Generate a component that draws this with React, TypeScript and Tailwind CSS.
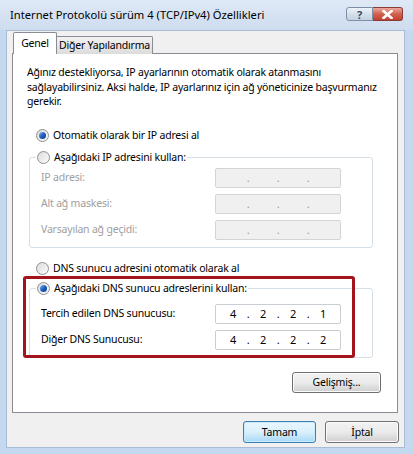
import React from 'react'

const font = { fontFamily: '"Noto Sans", "Liberation Sans", sans-serif' }

function Radio({ checked = false }: { checked?: boolean }) {
  return (
    <span className="relative inline-flex h-[13px] w-[13px] shrink-0 items-center justify-center rounded-full border border-[#8f8f8f] bg-gradient-to-br from-[#dcdcdc] to-[#fbfbfb]">
      {checked && (
        <span className="h-[7px] w-[7px] rounded-full bg-gradient-to-br from-[#8ab4f0] via-[#1f5fbf] to-[#0a3d8f]" />
      )}
    </span>
  )
}

function WinButton({ label, focused = false, className = '' }: { label: string; focused?: boolean; className?: string }) {
  return (
    <div
      className={
        'flex items-center justify-center rounded-[3px] border text-black ' +
        (focused
          ? 'border-[#3c7fb1] bg-gradient-to-b from-[#eaf6fd] via-[#d9f0fc] to-[#a7d9f5] shadow-[inset_0_0_0_1px_#c8ecfb] '
          : 'border-[#707070] bg-gradient-to-b from-[#f2f2f2] via-[#ebebeb] to-[#cfcfcf] shadow-[inset_0_0_0_1px_#fcfcfc] ') +
        className
      }
    >
      {label}
    </div>
  )
}

function IpBox({ values, disabled = false }: { values?: string[]; disabled?: boolean }) {
  const segs = values ?? ['', '', '', '']
  return (
    <div
      className={
        'flex h-[20px] w-[126px] items-center justify-center rounded-[2px] border text-[11px] ' +
        (disabled ? 'border-[#d4d4d4] bg-[#f0f0f0] text-[#9a9a9a]' : 'border-[#c9ced4] bg-white text-black')
      }
    >
      {segs.map((v, i) => (
        <React.Fragment key={i}>
          <span className="w-[22px] text-center">{v}</span>
          {i < 3 && <span className="w-[8px] text-center">.</span>}
        </React.Fragment>
      ))}
    </div>
  )
}

function FieldRow({ label, disabled = false, values }: { label: string; disabled?: boolean; values?: string[] }) {
  return (
    <div className="flex h-[26px] items-center">
      <span className={'w-[174px] ' + (disabled ? 'text-[#a0a0a0]' : 'text-black')}>{label}</span>
      <IpBox disabled={disabled} values={values} />
    </div>
  )
}

export default function App() {
  return (
    <div className="relative flex h-[454px] w-[413px] flex-col bg-[#c4d8ef] text-[10.5px] leading-[15px] tracking-[-0.2px]" style={font}>
      {/* Title bar */}
      <div className="flex h-[30px] items-start bg-gradient-to-b from-[#dfe9f6] to-[#cddcef] pl-[10px] pr-[10px]">
        <span className="mt-[7px] text-[11.2px] tracking-normal text-black">Internet Protokolü sürüm 4 (TCP/IPv4) Özellikleri</span>
        <div className="ml-auto mt-[7px] flex">
          <div className="flex h-[14px] w-[27px] items-center justify-center rounded-l-[3px] border border-[#7d8ea6] bg-gradient-to-b from-[#eef3f9] via-[#d6e0ec] to-[#c3d1e2] text-[11px] font-bold leading-none text-[#3c4a5e]">
            ?
          </div>
          <div className="flex h-[14px] w-[30px] items-center justify-center rounded-r-[3px] border border-l-0 border-[#8a3c34] bg-gradient-to-b from-[#eaa89b] via-[#d2604f] to-[#c24030]">
            <svg width="11" height="9" viewBox="0 0 11 9">
              <path d="M1.5 1 L9.5 8 M9.5 1 L1.5 8" stroke="#fff" strokeWidth="2.6" strokeLinecap="square" />
            </svg>
          </div>
        </div>
      </div>

      {/* Client area */}
      <div className="ml-[6px] mr-[8px] flex h-[418px] flex-col border border-[#a9bcd4] bg-[#f0f0f0] pl-[5px] pt-[1px]">
        {/* Tabs */}
        <div className="relative z-10 flex h-[22px] items-end pl-[1px]">
          <div className="flex h-[22px] w-[44px] items-start justify-center whitespace-nowrap rounded-t-[2px] border border-b-0 border-[#898c95] bg-white pt-[3px] text-black">
            Genel
          </div>
          <div className="flex h-[18px] w-[96px] items-center justify-center whitespace-nowrap rounded-tr-[2px] border border-l-0 border-b-0 border-[#898c95] bg-gradient-to-b from-[#f2f2f2] to-[#dcdcdc] text-black">
            Diğer Yapılandırma
          </div>
        </div>

        {/* Tab panel */}
        <div className="relative -mt-[1px] h-[360px] w-[386px] border border-[#898c95] bg-white px-[14px]">
          <p className="mt-[11px] whitespace-nowrap leading-[14.5px] text-black">
            Ağınız destekliyorsa, IP ayarlarının otomatik olarak atanmasını
            <br />
            sağlayabilirsiniz. Aksi halde, IP ayarlarınız için ağ yöneticinize başvurmanız
            <br />
            gerekir.
          </p>

          <div className="mt-[19px] flex items-center gap-[4px] pl-[9px] text-black">
            <Radio checked />
            <span>Otomatik olarak bir IP adresi al</span>
          </div>

          {/* Static IP group */}
          <div className="relative mt-[14px] ml-[2px] mr-[10px] h-[91px] rounded-[3px] border border-[#d5dfe5] px-[11px] pt-[7px]">
            <div className="absolute -top-[8px] left-[6px] flex items-center gap-[4px] bg-white px-[1px] text-black">
              <Radio />
              <span>Aşağıdaki IP adresini kullan:</span>
            </div>
            <FieldRow label="IP adresi:" disabled />
            <FieldRow label="Alt ağ maskesi:" disabled />
            <FieldRow label="Varsayılan ağ geçidi:" disabled />
          </div>

          <div className="mt-[13px] flex items-center gap-[4px] pl-[9px] text-black">
            <Radio />
            <span>DNS sunucu adresini otomatik olarak al</span>
          </div>

          {/* DNS group */}
          <div className="relative mt-[12px] ml-[2px] mr-[10px] h-[70px] rounded-[3px] border border-[#d5dfe5] px-[11px] pt-[12px]">
            <div className="absolute -top-[8px] left-[6px] flex items-center gap-[4px] bg-white px-[1px] text-black">
              <Radio checked />
              <span>Aşağıdaki DNS sunucu adreslerini kullan:</span>
            </div>
            <FieldRow label="Tercih edilen DNS sunucusu:" values={['4', '2', '2', '1']} />
            <FieldRow label="Diğer DNS Sunucusu:" values={['4', '2', '2', '2']} />
          </div>

          <div className="mt-[14px] flex justify-end pr-[2px]">
            <WinButton label="Gelişmiş..." className="h-[21px] w-[89px]" />
          </div>

          {/* Red highlight */}
          <div className="pointer-events-none absolute left-[10px] top-[222px] h-[82px] w-[332px] rounded-[3px] border-[3px] border-[#a3141c]" />
        </div>

        {/* Bottom buttons */}
        <div className="mt-[8px] flex justify-end gap-[9px] pr-[5px]">
          <WinButton label="Tamam" focused className="h-[22px] w-[73px]" />
          <WinButton label="İptal" className="h-[22px] w-[74px]" />
        </div>
      </div>
    </div>
  )
}
